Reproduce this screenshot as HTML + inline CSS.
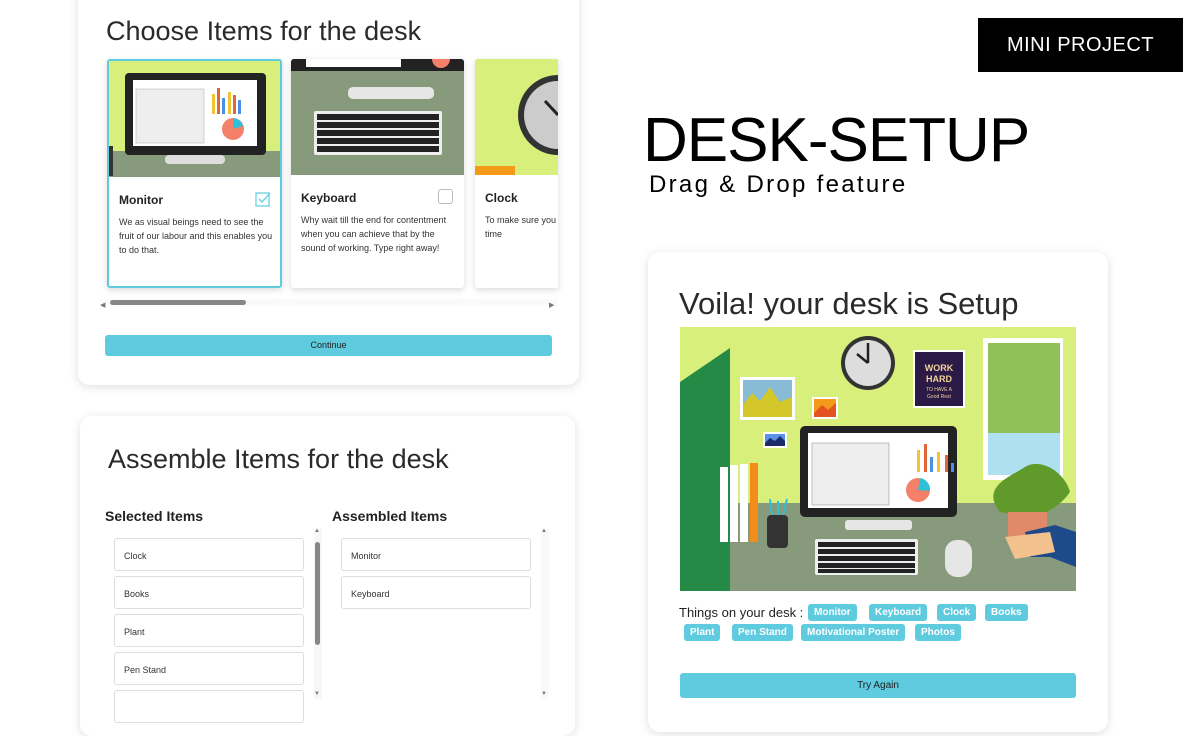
<!DOCTYPE html>
<html><head><meta charset="utf-8"><style>
*{box-sizing:border-box;margin:0;padding:0}
body{width:1200px;height:708px;overflow:hidden;background:#fff;font-family:"Liberation Sans",sans-serif;position:relative;color:#222}
.card{position:absolute;background:#fff;border-radius:12px;box-shadow:0 2px 10px rgba(0,0,0,.13)}
.abs{position:absolute}
h1{position:absolute;font-weight:normal;color:#2a2a2a;white-space:nowrap}
.item{position:absolute;background:#fff;border-radius:3px;box-shadow:0 2px 7px rgba(0,0,0,.15);overflow:hidden}
.item .t{position:absolute;left:10px;top:132px;font-size:12px;font-weight:bold;color:#222}
.item .d{position:absolute;left:10px;top:154px;font-size:9px;line-height:14px;color:#333;width:158px}
.li{position:absolute;height:33px;border:1px solid #ddd;border-radius:3px;font-size:9px;color:#333;padding:12px 9px}
.tag{position:absolute;height:17px;line-height:17px;background:#5ecbdf;color:#fff;font-weight:bold;font-size:10px;padding:0 6px;border-radius:3px;white-space:nowrap}
.btn{position:absolute;background:#5ecbdf;border-radius:3px;font-size:10px;text-align:center;color:#222}
</style></head><body>

<!-- Card 1 -->
<div class="card" style="left:78px;top:-20px;width:501px;height:405px">
  <h1 style="left:28px;top:36px;font-size:27px">Choose Items for the desk</h1>
  <div class="item" style="left:29px;top:79px;width:175px;height:229px;border:2px solid #5ecbdf">
    <svg class="abs" style="left:0;top:0" width="175" height="116"><rect width="175" height="116" fill="#d9ef7b"/><rect y="90" width="175" height="26" fill="#879a7c"/><rect x="16" y="12" width="141" height="82" rx="4" fill="#222"/><rect x="24" y="19" width="124" height="66" fill="#fff"/><rect x="27" y="28" width="68" height="54" fill="#eee" stroke="#aaa" stroke-width=".5"/><g fill="#f4c430"><rect x="103" y="33" width="3" height="20"/><rect x="119" y="31" width="3" height="22"/></g><g fill="#e0673a"><rect x="108" y="27" width="3" height="26"/><rect x="124" y="34" width="3" height="19"/></g><g fill="#4a8fe8"><rect x="113" y="37" width="3" height="16"/><rect x="129" y="39" width="3" height="14"/></g><circle cx="124" cy="68" r="11" fill="#f4806a"/><path d="M124 68 L124 57 A11 11 0 0 1 134 65Z" fill="#2ec0d8"/><rect x="56" y="94" width="60" height="9" rx="4" fill="#ddd"/><rect x="0" y="85" width="4" height="30" fill="#333"/></svg>
    <div class="t">Monitor</div>
    <svg class="abs" style="left:146px;top:130px" width="16" height="16"><rect x="1" y="2" width="13" height="13" fill="none" stroke="#5ecbdf" stroke-width="1.2"/><path d="M4 8 L7 11 L15 2" fill="none" stroke="#5ecbdf" stroke-width="1.3"/></svg>
    <div class="d">We as visual beings need to see the fruit of our labour and this enables you to do that.</div>
  </div>
  <div class="item" style="left:213px;top:79px;width:173px;height:229px">
    <svg class="abs" style="left:0;top:0" width="173" height="116"><rect width="173" height="116" fill="#879a7c"/><rect x="0" y="0" width="173" height="12" fill="#222"/><rect x="15" y="0" width="95" height="8" fill="#fff"/><circle cx="150" cy="0" r="9" fill="#f4806a"/><rect x="57" y="28" width="86" height="12" rx="5" fill="#e6e6e6"/><rect x="23" y="52" width="128" height="44" rx="2" fill="#eee"/><g fill="#222"><rect x="26" y="55" width="122" height="6"/><rect x="26" y="63" width="122" height="6"/><rect x="26" y="71" width="122" height="6"/><rect x="26" y="79" width="122" height="6"/><rect x="26" y="87" width="122" height="6"/></g></svg>
    <div class="t">Keyboard</div>
    <div class="abs" style="left:147px;top:130px;width:15px;height:15px;border:1px solid #bbb;border-radius:3px"></div>
    <div class="d">Why wait till the end for contentment when you can achieve that by the sound of working. Type right away!</div>
  </div>
  <div class="item" style="left:397px;top:79px;width:83px;height:229px;border-radius:3px 0 0 3px">
    <svg class="abs" style="left:0;top:0" width="83" height="116"><rect width="83" height="116" fill="#d9ef7b"/><circle cx="83" cy="56" r="40" fill="#333"/><circle cx="83" cy="56" r="34" fill="#ccc"/><path d="M70 42 L83 56" stroke="#222" stroke-width="3"/><rect x="0" y="107" width="40" height="9" fill="#f49a1b"/></svg>
    <div class="t">Clock</div>
    <div class="d">To make sure you<br>time</div>
  </div>
  <div class="abs" style="left:22px;top:319px;width:458px;height:7px;background:#fafafa"></div>
  <div class="abs" style="left:22px;top:321px;font-size:7px;color:#777">◀</div>
  <div class="abs" style="left:471px;top:321px;font-size:7px;color:#777">▶</div>
  <div class="abs" style="left:32px;top:320px;width:136px;height:5px;border-radius:3px;background:#888"></div>
  <div class="btn" style="left:27px;top:355px;width:447px;height:21px;line-height:21px;font-size:9px">Continue</div>
</div>

<!-- Card 2 -->
<div class="card" style="left:80px;top:416px;width:495px;height:320px">
  <h1 style="left:28px;top:28px;font-size:27px">Assemble Items for the desk</h1>
  <div class="abs" style="left:25px;top:92px;font-size:14px;font-weight:bold">Selected Items</div>
  <div class="abs" style="left:252px;top:92px;font-size:14px;font-weight:bold">Assembled Items</div>
  <div class="li" style="left:34px;top:122px;width:190px">Clock</div>
  <div class="li" style="left:34px;top:160px;width:190px">Books</div>
  <div class="li" style="left:34px;top:198px;width:190px">Plant</div>
  <div class="li" style="left:34px;top:236px;width:190px">Pen Stand</div>
  <div class="li" style="left:34px;top:274px;width:190px"></div>
  <div class="abs" style="left:234px;top:113px;width:8px;height:170px;background:#f7f7f7"></div>
  <div class="abs" style="left:235px;top:126px;width:5px;height:103px;border-radius:3px;background:#888"></div>
  <div class="abs" style="left:234px;top:112px;font-size:6px;color:#777">▲</div>
  <div class="abs" style="left:234px;top:275px;font-size:6px;color:#777">▼</div>
  <div class="li" style="left:261px;top:122px;width:190px">Monitor</div>
  <div class="li" style="left:261px;top:160px;width:190px">Keyboard</div>
  <div class="abs" style="left:461px;top:113px;width:8px;height:170px;background:#f9f9f9"></div>
  <div class="abs" style="left:461px;top:112px;font-size:6px;color:#777">▲</div>
  <div class="abs" style="left:461px;top:275px;font-size:6px;color:#777">▼</div>
</div>

<!-- Title -->
<div class="abs" style="left:978px;top:18px;width:205px;height:54px;background:#000;color:#fff;font-size:20px;line-height:54px;text-align:center;letter-spacing:.5px">MINI PROJECT</div>
<div class="abs" style="left:643px;top:106px;font-size:62px;letter-spacing:-1px;color:#000;line-height:70px">DESK-SETUP</div>
<div class="abs" style="left:649px;top:171px;font-size:24px;letter-spacing:2.3px;color:#000">Drag &amp; Drop feature</div>

<!-- Card 3 -->
<div class="card" style="left:648px;top:252px;width:460px;height:480px">
  <h1 style="left:31px;top:34px;font-size:31px">Voila! your desk is Setup</h1>
  <svg class="abs" style="left:32px;top:75px" width="396" height="264">
    <rect width="396" height="264" fill="#d9ef7b"/>
    <rect y="176" width="396" height="88" fill="#879a7c"/>
    <polygon points="0,55 50,21 50,264 0,264" fill="#248a45"/>
    <circle cx="188" cy="36" r="27" fill="#333"/><circle cx="188" cy="36" r="23" fill="#ddd"/><path d="M188 36 L188 16 M188 36 L177 27" stroke="#222" stroke-width="2.5"/>
    <rect x="233" y="23" width="52" height="58" fill="#fff"/><rect x="235" y="25" width="48" height="54" fill="#2a1a45"/>
    <text x="259" y="44" font-size="9" font-weight="bold" fill="#f2d29a" text-anchor="middle">WORK</text><text x="259" y="55" font-size="9" font-weight="bold" fill="#f2d29a" text-anchor="middle">HARD</text><text x="259" y="64" font-size="5" fill="#f2d29a" text-anchor="middle">TO HAVE A</text><text x="259" y="71" font-size="5" fill="#f2d29a" text-anchor="middle">Good Rest</text>
    <rect x="303" y="11" width="80" height="142" fill="#fff"/><rect x="308" y="16" width="72" height="90" fill="#8fc158"/><rect x="308" y="106" width="72" height="42" fill="#aee0f0"/>
    <rect x="60" y="50" width="55" height="43" fill="#fff"/><rect x="63" y="53" width="49" height="37" fill="#88bcd6"/><polygon points="63,78 72,66 80,74 90,60 100,75 112,70 112,90 63,90" fill="#d4c72a"/>
    <rect x="132" y="70" width="26" height="22" fill="#fff"/><rect x="134" y="72" width="22" height="18" fill="#f49a1b"/><polygon points="134,86 142,78 148,83 156,76 156,90 134,90" fill="#e2531f"/>
    <rect x="83" y="105" width="24" height="16" fill="#fff"/><rect x="85" y="107" width="20" height="12" fill="#5a90e6"/><polygon points="85,116 90,111 95,114 100,109 105,114 105,119 85,119" fill="#1a2a6a"/>
    <rect x="120" y="99" width="157" height="91" rx="5" fill="#222"/><rect x="128" y="106" width="140" height="75" fill="#fff"/>
    <rect x="132" y="116" width="77" height="62" fill="#eee" stroke="#999" stroke-width=".6"/>
    <g fill="#f4c430"><rect x="237" y="123" width="3" height="22"/><rect x="257" y="125" width="3" height="20"/></g><g fill="#e0673a"><rect x="244" y="117" width="3" height="28"/><rect x="265" y="128" width="3" height="17"/></g><g fill="#4a8fe8"><rect x="250" y="130" width="3" height="15"/><rect x="271" y="136" width="3" height="9"/></g>
    <circle cx="238" cy="163" r="12" fill="#f4806a"/><path d="M238 163 L240 151 A12 12 0 0 1 250 164Z" fill="#2ec0d8"/>
    <rect x="165" y="193" width="67" height="10" rx="3" fill="#e6e6e6"/>
    <rect x="135" y="212" width="103" height="36" rx="2" fill="#eee"/><g fill="#222"><rect x="138" y="215" width="97" height="5"/><rect x="138" y="222" width="97" height="5"/><rect x="138" y="229" width="97" height="5"/><rect x="138" y="236" width="97" height="5"/><rect x="138" y="242" width="97" height="4"/></g>
    <rect x="265" y="213" width="27" height="37" rx="12" fill="#e6e6e6"/>
    <g fill="#fff"><rect x="40" y="140" width="8" height="75"/><rect x="50" y="138" width="8" height="77"/><rect x="60" y="137" width="8" height="78"/></g><rect x="70" y="136" width="8" height="79" fill="#f28c1b"/>
    <rect x="87" y="188" width="21" height="33" rx="4" fill="#333"/><path d="M92 188 L90 172 M98 188 L98 174 M103 188 L107 172" stroke="#2ec0d8" stroke-width="2"/>
    <path d="M320 185 C300 160 330 150 345 140 C360 130 385 145 390 165 C380 180 360 190 350 190 Z" fill="#5f9a2a"/>
    <rect x="328" y="185" width="39" height="25" fill="#e08a6a"/>
    <path d="M345 205 L375 198 L396 205 L396 240 L370 230 L350 230 Z" fill="#1e4a8a"/>
    <path d="M325 210 L370 205 L375 225 L335 232 Z" fill="#f2c18d"/>
  </svg>
  <div class="abs" style="left:31px;top:352px;font-size:13px;line-height:17px">Things on your desk :</div>
  <span class="tag" style="left:160px;top:352px">Monitor</span>
  <span class="tag" style="left:221px;top:352px">Keyboard</span>
  <span class="tag" style="left:289px;top:352px">Clock</span>
  <span class="tag" style="left:337px;top:352px">Books</span>
  <span class="tag" style="left:36px;top:372px">Plant</span>
  <span class="tag" style="left:84px;top:372px">Pen Stand</span>
  <span class="tag" style="left:153px;top:372px">Motivational Poster</span>
  <span class="tag" style="left:267px;top:372px">Photos</span>
  <div class="btn" style="left:32px;top:421px;width:396px;height:25px;line-height:25px">Try Again</div>
</div>
</body></html>
